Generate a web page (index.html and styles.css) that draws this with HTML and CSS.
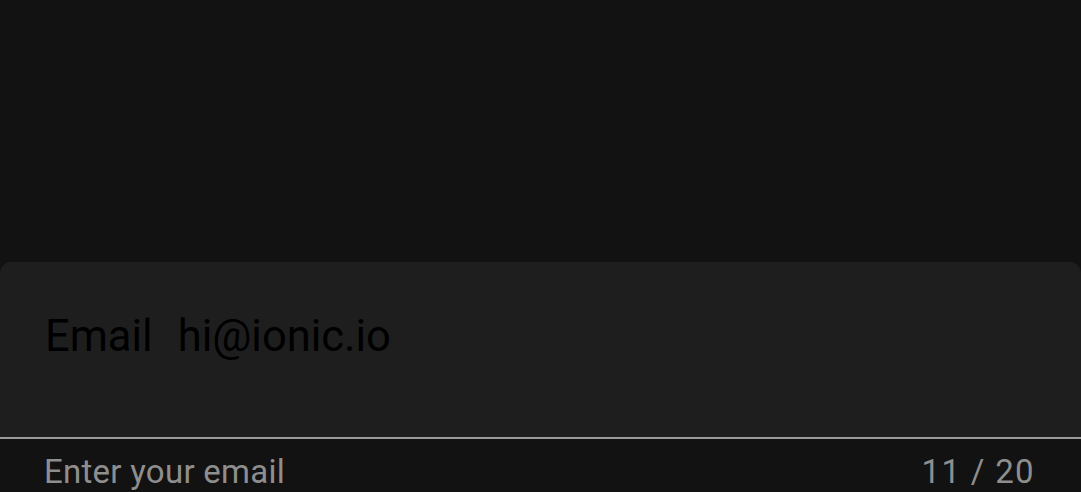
FILE: index.html
```html
<!DOCTYPE html>
<html lang="en">
<head>
<meta charset="utf-8">
<title>Input</title>
<link rel="stylesheet" href="styles.css">
</head>
<body>
<main class="page">
  <div class="field">
    <label class="field-row">
      <span class="field-label">Email</span>
      <span class="field-value">hi@ionic.io</span>
    </label>
  </div>
  <div class="field-bottom">
    <span class="helper">Enter your email</span>
    <span class="counter">11 / 20</span>
  </div>
</main>
</body>
</html>
```
FILE: styles.css
```css
html, body {
  margin: 0;
  padding: 0;
  background: #121212;
}
body {
  width: 1081px;
  height: 492px;
  overflow: hidden;
  font-family: Roboto, "Noto Sans", sans-serif;
}
.page {
  padding-top: 262px;
}
.field {
  background: #1e1e1e;
  border-radius: 11px 11px 0 0;
  height: 177px;
  box-sizing: border-box;
  padding: 49px 44px 0 45px;
  border-bottom: 2px solid #9a9a9a;
}
.field-row {
  display: flex;
  align-items: baseline;
  gap: 25px;
  font-size: 43.5px;
  line-height: 52px;
  color: #000;
}
.field-bottom {
  display: flex;
  justify-content: space-between;
  padding: 13px 46px 0 44px;
  font-size: 33px;
  line-height: 39px;
  color: #8e8e8e;
}
.helper {
  letter-spacing: 0.008em;
}
.counter {
  letter-spacing: 0.04em;
}
```
